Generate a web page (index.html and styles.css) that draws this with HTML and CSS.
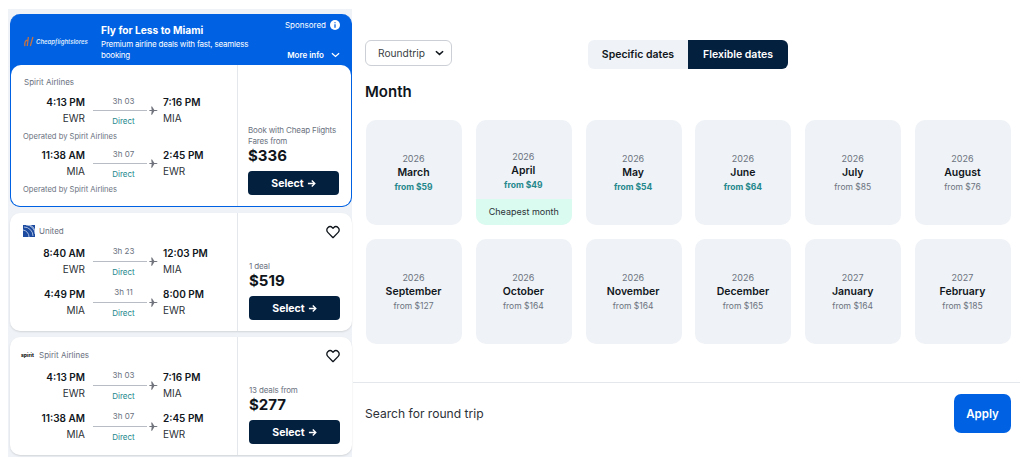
FILE: index.html
```html
<!DOCTYPE html>
<html lang="en">
<head>
<meta charset="utf-8">
<title>Flights to Miami</title>
<link rel="stylesheet" href="styles.css">
</head>
<body>
<svg class="defs" width="0" height="0" aria-hidden="true">
  <symbol id="plane" viewBox="0 0 12 12"><path d="M0 5.300h3.600L2.900.5h1.200l3 4.800h2.800c1 0 1.600.3 1.600.7s-.6.7-1.600.7H7.100l-3 4.800H2.900L3.600 6.700H0l1-.7z"/></symbol>
  <symbol id="heart" viewBox="0 0 24 24"><path d="M12 20.500 4.200 12.600a5 5 0 0 1 0-7.100 5 5 0 0 1 7 0l.8.8.8-.8a5 5 0 0 1 7 0 5 5 0 0 1 0 7.100z" fill="none" stroke="#10161c" stroke-width="2" stroke-linejoin="round"/></symbol>
  <symbol id="arrow" viewBox="0 0 10 10"><path d="M1 5h7.500M5.300 1.600 8.700 5 5.300 8.400" fill="none" stroke="#fff" stroke-width="1.500"/></symbol>
</svg>
<div class="page">
  <section class="results">
    <article class="card ad">
      <header class="ad-head">
        <div class="ad-logo">
          <svg class="ad-mark" viewBox="0 0 11 12" width="10" height="11"><path d="M3.800 4.500C1.300 4.500.5 8 1 11M4.800 1 3.600 11M9.800 1 7 11" fill="none" stroke="#c8733f" stroke-width="1.400"/></svg>
          <span class="ad-brand">Cheapflightslores</span>
        </div>
        <div class="ad-copy">
          <div class="ad-title">Fly for Less to Miami</div>
          <div class="ad-sub">Premium airline deals with fast, seamless booking</div>
        </div>
        <div class="ad-meta">
          <div class="ad-sponsored">Sponsored
            <svg viewBox="0 0 10 10" width="10" height="10"><circle cx="5" cy="5" r="5" fill="#fff"/><path d="M5 4.300v3.400M5 2.200v1.100" stroke="#0060e0" stroke-width="1.300"/></svg>
          </div>
          <div class="ad-more">More info
            <svg viewBox="0 0 10 6" width="9" height="6"><path d="M1 1l4 3.600L9 1" fill="none" stroke="#fff" stroke-width="1.400"/></svg>
          </div>
        </div>
      </header>
      <div class="card-body ad-body">
        <div class="legs ad-legs">
          <div class="airline ad-airline">Spirit Airlines</div>
          <div class="leg">
            <div class="t-l"><b>4:13 PM</b><span>EWR</span></div>
            <div class="mid"><small>3h 03</small><i class="line"><svg class="plane"><use href="#plane"/></svg></i><em>Direct</em></div>
            <div class="t-r"><b>7:16 PM</b><span>MIA</span></div>
          </div>
          <div class="operated">Operated by Spirit Airlines</div>
          <div class="leg">
            <div class="t-l"><b>11:38 AM</b><span>MIA</span></div>
            <div class="mid"><small>3h 07</small><i class="line"><svg class="plane"><use href="#plane"/></svg></i><em>Direct</em></div>
            <div class="t-r"><b>2:45 PM</b><span>EWR</span></div>
          </div>
          <div class="operated">Operated by Spirit Airlines</div>
        </div>
        <div class="price-col">
          <div class="deal">Book with Cheap Flights<br>Fares from</div>
          <div class="price">$336</div>
          <button class="select">Select <svg><use href="#arrow"/></svg></button>
        </div>
      </div>
    </article>

    <article class="card plain">
      <div class="card-body">
        <div class="legs">
          <div class="airline"><svg class="logo-united" viewBox="0 0 12 12" width="12" height="12"><rect width="12" height="12" fill="#1d4ba0"/><path d="M3 0a9 9 0 0 1 9 9M1 2a9 9 0 0 1 9 9M5.500 0A7 7 0 0 1 12 6.500M0 5a7 7 0 0 1 6 7" fill="none" stroke="#cdd8ee" stroke-width=".8"/></svg>United</div>
          <div class="leg">
            <div class="t-l"><b>8:40 AM</b><span>EWR</span></div>
            <div class="mid"><small>3h 23</small><i class="line"><svg class="plane"><use href="#plane"/></svg></i><em>Direct</em></div>
            <div class="t-r"><b>12:03 PM</b><span>MIA</span></div>
          </div>
          <div class="leg">
            <div class="t-l"><b>4:49 PM</b><span>MIA</span></div>
            <div class="mid"><small>3h 11</small><i class="line"><svg class="plane"><use href="#plane"/></svg></i><em>Direct</em></div>
            <div class="t-r"><b>8:00 PM</b><span>EWR</span></div>
          </div>
        </div>
        <div class="price-col">
          <svg class="heart"><use href="#heart"/></svg>
          <div class="deal">1 deal</div>
          <div class="price">$519</div>
          <button class="select">Select <svg><use href="#arrow"/></svg></button>
        </div>
      </div>
    </article>

    <article class="card plain">
      <div class="card-body">
        <div class="legs">
          <div class="airline"><span class="logo-spirit">spirit</span>Spirit Airlines</div>
          <div class="leg">
            <div class="t-l"><b>4:13 PM</b><span>EWR</span></div>
            <div class="mid"><small>3h 03</small><i class="line"><svg class="plane"><use href="#plane"/></svg></i><em>Direct</em></div>
            <div class="t-r"><b>7:16 PM</b><span>MIA</span></div>
          </div>
          <div class="leg">
            <div class="t-l"><b>11:38 AM</b><span>MIA</span></div>
            <div class="mid"><small>3h 07</small><i class="line"><svg class="plane"><use href="#plane"/></svg></i><em>Direct</em></div>
            <div class="t-r"><b>2:45 PM</b><span>EWR</span></div>
          </div>
        </div>
        <div class="price-col">
          <svg class="heart"><use href="#heart"/></svg>
          <div class="deal">13 deals from</div>
          <div class="price">$277</div>
          <button class="select">Select <svg><use href="#arrow"/></svg></button>
        </div>
      </div>
    </article>
  </section>

  <section class="picker">
    <div class="picker-main">
      <div class="controls">
        <button class="trip">Roundtrip
          <svg viewBox="0 0 10 6" width="9" height="6"><path d="M1 1l4 3.600L9 1" fill="none" stroke="#10161c" stroke-width="1.700"/></svg>
        </button>
        <div class="toggle">
          <button class="tog">Specific dates</button>
          <button class="tog on">Flexible dates</button>
        </div>
      </div>
      <h2 class="heading">Month</h2>
      <div class="months">
        <div class="month"><span class="y">2026</span><strong>March</strong><span class="p low">from $59</span></div>
        <div class="month cheapest"><span class="y">2026</span><strong>April</strong><span class="p low">from $49</span><div class="tag">Cheapest month</div></div>
        <div class="month"><span class="y">2026</span><strong>May</strong><span class="p low">from $54</span></div>
        <div class="month"><span class="y">2026</span><strong>June</strong><span class="p low">from $64</span></div>
        <div class="month"><span class="y">2026</span><strong>July</strong><span class="p">from $85</span></div>
        <div class="month"><span class="y">2026</span><strong>August</strong><span class="p">from $76</span></div>
        <div class="month"><span class="y">2026</span><strong>September</strong><span class="p">from $127</span></div>
        <div class="month"><span class="y">2026</span><strong>October</strong><span class="p">from $164</span></div>
        <div class="month"><span class="y">2026</span><strong>November</strong><span class="p">from $164</span></div>
        <div class="month"><span class="y">2026</span><strong>December</strong><span class="p">from $165</span></div>
        <div class="month"><span class="y">2027</span><strong>January</strong><span class="p">from $164</span></div>
        <div class="month"><span class="y">2027</span><strong>February</strong><span class="p">from $185</span></div>
      </div>
    </div>
    <footer class="foot">
      <span class="foot-text">Search for round trip</span>
      <button class="apply">Apply</button>
    </footer>
  </section>
</div>
</body>
</html>
```

FILE: styles.css
```css
* { box-sizing: border-box; }
html, body { margin: 0; height: 466px; background: #fff; overflow: hidden; }
body { font-family: Inter, "Liberation Sans", sans-serif; color: #10161c; }
button { font-family: inherit; border: 0; padding: 0; }
.defs { position: absolute; }
.page { display: flex; height: 466px; }

.results {
  flex: none; width: 344px; margin: 9px 0 9px 8px; padding: 5px 0 2px 2px;
  background: #eff2f6; display: flex; flex-direction: column; gap: 6px;
}
.card { background: #fff; border-radius: 10px; box-shadow: 0 1px 2px rgba(0,0,0,.12); }
.plain { height: 118px; }
.ad { height: 193px; background: #0062e3; border: 1px solid #0062e3; border-top: 0; display: flex; flex-direction: column; box-shadow: none; }
.ad-head { height: 51px; display: flex; color: #fff; flex: none; }
.ad-logo { width: 90px; padding: 22px 0 0 13px; display: flex; gap: 2px; align-items: flex-start; }
.ad-brand { font-size: 6px; font-style: italic; font-weight: 600; color: #dbe7fb; white-space: nowrap; margin-top: 2px; }
.ad-copy { width: 160px; padding-top: 9px; }
.ad-title { font-size: 10.2px; font-weight: 700; line-height: 15px; }
.ad-sub { font-size: 8px; letter-spacing: -.2px; line-height: 11px; margin-top: 1px; }
.ad-meta { flex: 1; display: flex; flex-direction: column; align-items: flex-end; padding: 6px 11px 0 0; font-size: 8px; }
.ad-sponsored { display: flex; align-items: center; gap: 4px; }
.ad-more { display: flex; align-items: center; gap: 7px; margin-top: 20px; font-weight: 600; }

.card-body { display: flex; height: 100%; }
.ad-body { background: #fff; border-radius: 10px 10px 9px 9px; height: 142px; }
.legs { width: 228px; border-right: 1px solid #e4e7ec; padding: 12px 0 0 0; flex: none; }
.ad-legs { padding-top: 11px; width: 227px; }
.airline { font-size: 8px; color: #6b7280; height: 12px; line-height: 12px; padding-left: 13px; margin-bottom: 4px; display: flex; align-items: center; gap: 4px; }
.ad-airline { margin-bottom: 0; }
.logo-spirit { font-size: 5px; font-weight: 800; color: #222; width: 15px; margin-left: -2px; margin-right: -1px; }
.leg { display: flex; height: 33px; margin-top: 8px; }
.ad-legs .leg { margin-top: 6px; }
.ad-legs .operated + .leg { margin-top: 4px; }
.t-l, .t-r { display: flex; flex-direction: column; }
.t-l { width: 75px; align-items: flex-end; }
.ad-legs .t-l { width: 74px; }
.t-l b, .t-r b { font-size: 10px; font-weight: 600; line-height: 16px; }
.t-l span, .t-r span { font-size: 10px; line-height: 16px; color: #2c3137; }
.mid { width: 78px; padding: 0 13px 0 12px; display: flex; flex-direction: column; align-items: center; position: relative; }
.ad-legs .mid { padding-top: 1px; }
.mid small { font-size: 8px; color: #6b7280; line-height: 12px; }
.line { display: block; width: 54px; height: 1px; background: #b8bcc4; margin: 4px 0 0 -4px; position: relative; align-self: flex-start; }
.ad-legs .line { margin-top: 3px; }
.plane { position: absolute; left: 56px; top: -4px; width: 9px; height: 9px; fill: #70737c; }
.mid em { font-style: normal; font-size: 8px; color: #23878c; line-height: 12px; margin-top: 4px; }
.operated { font-size: 7.6px; color: #6b7280; line-height: 12px; padding-left: 12px; height: 12px; margin-top: 4px; }

.price-col { flex: 1; min-width: 0; padding: 0 11px 11px 11px; display: flex; flex-direction: column; justify-content: flex-end; position: relative; }
.ad-body .price-col { padding-left: 10px; }
.deal { font-size: 8px; letter-spacing: -.15px; line-height: 11px; color: #6b7280; white-space: nowrap; margin-bottom: -1px; }
.price { font-size: 15px; font-weight: 700; line-height: 20px; margin-bottom: 5px; color: #10161c; }
.select { flex: none; height: 24px; width: 91px; background: #04203f; color: #fff; border-radius: 4px; font-size: 10.5px; font-weight: 700; display: flex; align-items: center; justify-content: center; gap: 3px; }
.select svg { width: 9px; height: 9px; }
.heart { position: absolute; right: 11px; top: 11px; width: 16px; height: 16px; }

.picker { flex: 1; min-width: 0; margin-left: 1px; display: flex; flex-direction: column; }
.picker-main { height: 382px; padding: 40px 0 0 12px; }
.controls { display: flex; align-items: flex-start; position: relative; }
.trip { width: 87px; height: 26px; border: 1px solid #ccd0d6; border-radius: 6px; background: #fff; font-size: 10.2px; color: #3a3f45; display: flex; align-items: center; padding-left: 12px; gap: 10px; }
.toggle { display: flex; margin-left: 136px; height: 29px; border-radius: 6px; overflow: hidden; }
.tog { width: 100px; background: #eff2f6; font-size: 10.5px; font-weight: 600; color: #10161c; }
.tog.on { background: #04203f; color: #fff; }
.heading { margin: 13px 0 0; font-size: 15px; font-weight: 600; line-height: 20px; }
.months { display: grid; grid-template-columns: repeat(6, 96px); column-gap: 13.8px; row-gap: 14px; margin: 18px 0 0 1px; }
.month { height: 105px; background: #eff2f6; border-radius: 10px; display: flex; flex-direction: column; align-items: center; padding: 32px 1px 0 0; position: relative; overflow: hidden; }
.cheapest { padding-top: 30px; }
.y { font-size: 9px; color: #6b7280; line-height: 13px; }
.month strong { font-size: 10.5px; font-weight: 600; line-height: 15px; }
.p { font-size: 8.5px; color: #6b7280; line-height: 14px; }
.p.low { color: #23878c; font-weight: 700; }
.tag { position: absolute; left: 0; right: 0; bottom: 0; height: 26px; background: #d9fbf0; font-size: 9px; line-height: 26px; text-align: center; color: #2c3137; }

.foot { height: 84px; margin-right: 6px; border-top: 1px solid #e4e7ec; padding: 11px 9px 0 12px; display: flex; justify-content: space-between; align-items: flex-start; }
.foot-text { font-size: 12.1px; color: #2c3137; line-height: 39px; }
.apply { flex: none; width: 57px; height: 39px; border-radius: 7px; background: #0062e3; color: #fff; font-size: 11.5px; font-weight: 600; }
```
